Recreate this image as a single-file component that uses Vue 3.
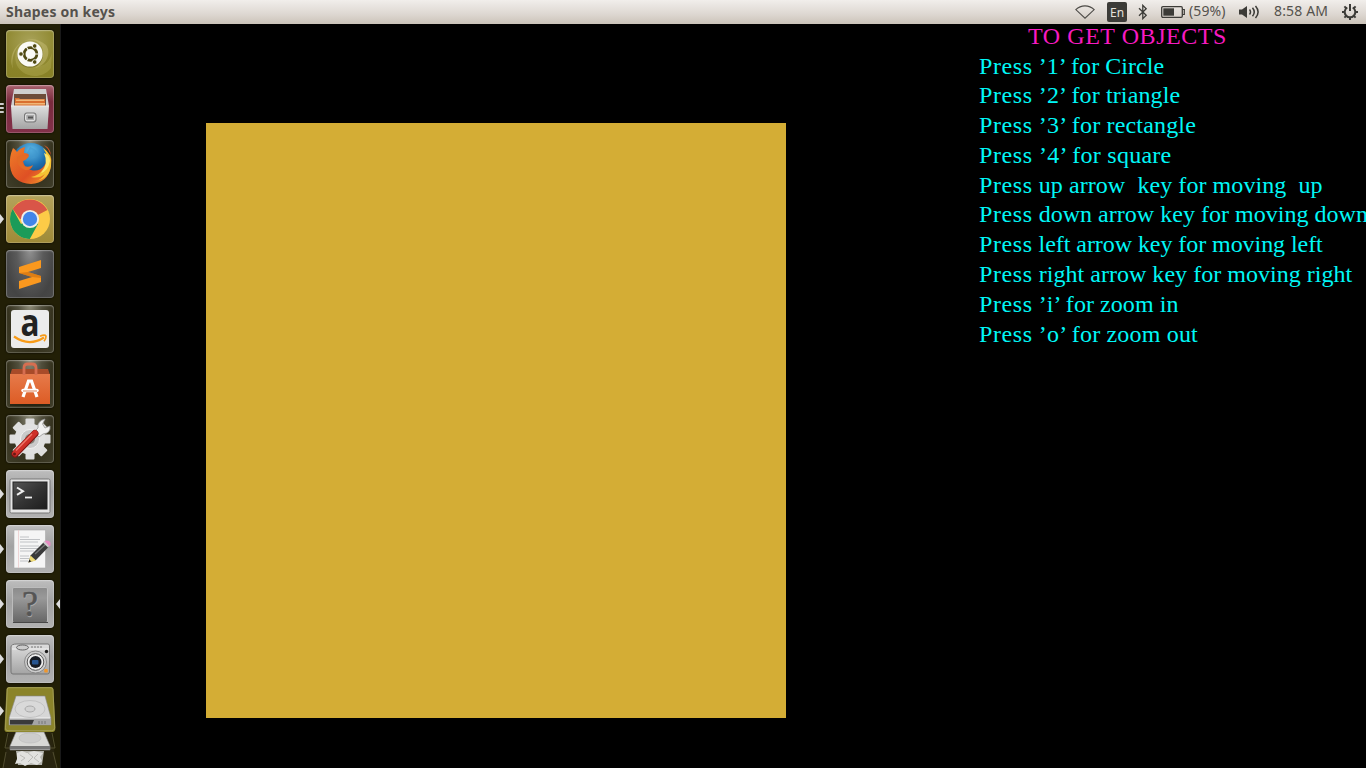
<script setup>
const tiles = [
  { name: 'dash', tone: 'olive' },
  { name: 'files', tone: 'wine', run: 3 },
  { name: 'firefox', tone: 'dark' },
  { name: 'chrome', tone: 'gold', run: 1 },
  { name: 'sublime', tone: 'slate' },
  { name: 'amazon', tone: 'dark' },
  { name: 'software', tone: 'dark' },
  { name: 'settings', tone: 'dark' },
  { name: 'terminal', tone: 'silver', run: 1 },
  { name: 'editor', tone: 'silver', run: 1 },
  { name: 'unknown', tone: 'silver', run: 1, focused: true },
  { name: 'camera', tone: 'silver', run: 1 },
]
const lines = [
  { text: ' ’1’ for Circle', track: 0.04 },
  { text: ' ’2’ for triangle', track: 0.12 },
  { text: ' ’3’ for rectangle', track: 0.18 },
  { text: ' ’4’ for square', track: 0.27 },
  { text: ' up arrow  key for moving  up', track: 0.07 },
  { text: ' down arrow key for moving down', track: 0.02 },
  { text: ' left arrow key for moving left', track: -0.06 },
  { text: ' right arrow key for moving right', track: 0.03 },
  { text: ' ’i’ for zoom in', track: 0.06 },
  { text: ' ’o’ for zoom out', track: 0.18 },
]
const teeth = [0, 45, 90, 135, 180, 225, 270, 315]
</script>

<template>
  <div class="desktop">
    <header class="panel">
      <span class="title">Shapes on keys</span>
      <div class="indicators">
        <svg class="wifi" width="20" height="14" viewBox="0 0 20 14"><path d="M.8 4.600C6-.4 14-.4 19.200 4.600L10 13.200z" fill="none" stroke="#4c4a46" stroke-width="1.100" /></svg>
        <span class="lang">En</span>
        <svg class="bt" width="10" height="16" viewBox="0 0 10 16"><path d="M1 4.200L8.200 11.200 4.800 14.600V1.400L8.200 4.800 1 11.800" fill="none" stroke="#3c3b37" stroke-width="1.300" /></svg>
        <svg class="battery" width="24" height="12" viewBox="0 0 24 12"><rect x=".7" y=".7" width="20.600" height="10.600" rx="1.200" fill="none" stroke="#3c3b37" stroke-width="1.300" /><path d="M2.300 2.300h10.700v7.400H2.300z" fill="#3c3b37" /><path d="M21.500 3.500h1.800v5h-1.800" fill="none" stroke="#3c3b37" stroke-width="1.200" /></svg>
        <span class="percent">(59%)</span>
        <svg class="sound" width="21" height="14" viewBox="0 0 21 14"><path d="M0 4.500h3L8 1v12L3 9.500H0z" fill="#3c3b37" /><path d="M10.500 4.500q2 2.500 0 5M13.500 2.700q3.500 4.300 0 8.600M16.500 1q5.200 6 0 12" fill="none" stroke="#3c3b37" stroke-width="1.500" /></svg>
        <span class="clock">8:58 AM</span>
        <svg class="gear" width="18" height="18" viewBox="0 0 18 18"><path d="M6.300 4.500A5.300 5.300 0 1 0 11.700 4.500" fill="none" stroke="#3c3b37" stroke-width="2" /><path d="M9 1v7M3.400 3.400l2 2M14.600 3.400l-2 2M1 9h3M14 9h3M3.400 14.600l2-2M14.600 14.600l-2-2M9 14v3" stroke="#3c3b37" stroke-width="2" /></svg>
      </div>
    </header>

    <div class="body">
      <nav class="dock">
        <svg class="defs" width="0" height="0">
          <defs>
            <linearGradient id="metal" x2="0" y2="1"><stop stop-color="#dedede" /><stop offset="1" stop-color="#a4a4a4" /></linearGradient>
            <linearGradient id="orange" x2="0" y2="1"><stop stop-color="#e67a4a" /><stop offset="1" stop-color="#dd5c25" /></linearGradient>
            <linearGradient id="screen" x2="1" y2="1"><stop stop-color="#555" /><stop offset=".5" stop-color="#343434" /><stop offset="1" stop-color="#1d1d1d" /></linearGradient>
            <radialGradient id="globe" cx=".5" cy=".2" r=".8"><stop stop-color="#62bce8" /><stop offset=".5" stop-color="#1d70b0" /><stop offset="1" stop-color="#123869" /></radialGradient>
            <linearGradient id="fox" x2="1" y2="1"><stop stop-color="#ef8028" /><stop offset=".6" stop-color="#df5024" /><stop offset="1" stop-color="#f5a22c" /></linearGradient>
            <linearGradient id="box" x2="0" y2="1"><stop stop-color="#8b8b8b" /><stop offset=".3" stop-color="#999" /><stop offset="1" stop-color="#666" /></linearGradient>
          </defs>
        </svg>
        <div v-for="t in tiles" :key="t.name" class="slot">
          <span v-if="t.run === 1" class="arrow"></span>
          <span v-if="t.run === 3" class="pips"><i></i><i></i><i></i></span>
          <span v-if="t.focused" class="arrow focus"></span>
          <div class="tile" :class="t.tone">
            <svg width="48" height="48" viewBox="0 0 48 48">
              <g v-if="t.name === 'dash'">
                <path d="M7 39C3 16 23 0 40 15 46 23 40 36 29 38 43 28 38 9 23 10 9 12 2 26 7 39z" fill="#d1c982" opacity=".4" />
                <path d="M45 38C34 52 14 46 10 33 7 21 14 14 20 12 12 24 22 38 34 36 41 35 45 28 46 22z" fill="#c5bc68" opacity=".3" />
                <circle cx="24" cy="25" r="12.800" fill="#5d571c" opacity=".5" />
                <circle cx="24" cy="24" r="12.600" fill="#fafaf5" />
                <circle cx="24.500" cy="24" r="6.400" fill="none" stroke="#4f4912" stroke-width="2.800" />
                <path d="M24.500 24h9M24.500 24l-4.500-7.800M24.500 24l-4.500 7.800" stroke="#fafaf5" stroke-width="1.100" />
                <g fill="#4f4912" stroke="#fafaf5" stroke-width=".9"><circle cx="15" cy="24" r="2.300" /><circle cx="28.700" cy="16" r="2.300" /><circle cx="28.700" cy="32" r="2.300" /></g>
              </g>
              <g v-else-if="t.name === 'files'">
                <path d="M8 4h32l3 17H5z" fill="#cfcfcf" /><path d="M8 9h32v13H8z" fill="#6d4c3a" />
                <path d="M9 13h4l1 1h25v8H9z" fill="#d96f30" /><path d="M10 14.500h28v1.500H10zM9 18h30v1.500H9z" fill="#f0b778" />
                <path d="M5 21h38l-1.500 23h-35z" fill="url(#metal)" /><path d="M5 21h38" stroke="#ececec" />
                <rect x="18.500" y="28" width="11.500" height="9" rx="2" fill="#aaa" stroke="#777" /><rect x="19.700" y="29.200" width="9" height="6.500" rx="1.500" fill="none" stroke="#eee" /><path d="M22 32.500h5" stroke="#555" stroke-width="2" />
              </g>
              <g v-else-if="t.name === 'firefox'">
                <circle cx="25" cy="22" r="19" fill="url(#globe)" />
                <path d="M24 7q9 3 8 10-6-2-10 4l-5-1z" fill="#3c94cb" opacity=".5" />
                <path d="M7 8q2 1 4 4 3-4 8-5-1 4-1 6 4 0 5 2-2 4-6 6 1 7 8 9 8 2 13-4 4-5 3-13 3 3 3 8Q47 9 38 5q9 7 7 21-3 17-20 18Q6 43 4 26 3 17 7 8z" fill="url(#fox)" />
                <path d="M37 8q7 9 1 20-5 8-13 9 8 2 14-3-4 6-9 7 13-2 15-15 2-12-8-18z" fill="#f6c333" /><path d="M38 13q5 11-3 20 7-2 9-12 0-6-6-8z" fill="#fbe66c" />
                <path d="M11 17q4-3 12-1-3 5-8 5l3 5q5 2 9-1-2 6-8 5-9-4-8-13z" fill="#e46b25" />
              </g>
              <g v-else-if="t.name === 'chrome'">
                <circle cx="24" cy="24" r="20" fill="#fccb47" />
                <path d="M24 24H14L6.700 14A20 20 0 0 1 41.300 15z" fill="#d95548" />
                <path d="M6.700 14A20 20 0 0 0 23.800 44L32 29 24 24 15 29z" fill="#1b9b59" />
                <path d="M24 15h17.500L30 20z" fill="#b98d20" opacity=".25" />
                <circle cx="24" cy="24" r="9.100" fill="#f0eee7" /><circle cx="24" cy="24" r="7.200" fill="#4285e8" />
              </g>
              <g v-else-if="t.name === 'sublime'">
                <path d="M13 17L35 10V18L22 22 35 26V32L13 39V31L26 27 13 23z" fill="#fa981e" /><path d="M13 23l9-1 13 4v2L26 27z" fill="#c66a0c" opacity=".55" />
              </g>
              <g v-else-if="t.name === 'amazon'">
                <rect x="5" y="5" width="38" height="38" rx="3" fill="#ececec" />
                <text x="24" y="31" text-anchor="middle" class="amazon-a" textLength="19" lengthAdjust="spacingAndGlyphs">a</text>
                <path d="M8 31.500q15 10.500 30 1" fill="none" stroke="#f79b18" stroke-width="2.200" /><path d="M34 31.200q5-2 6 0 0 3-2 5" fill="none" stroke="#f79b18" stroke-width="1.700" />
              </g>
              <g v-else-if="t.name === 'software'">
                <path d="M4 43h40v3H4z" fill="#161405" opacity=".5" /><path d="M6 9h36l2 6H4z" fill="#a84b29" /><path d="M4 14h40v30H4z" fill="url(#orange)" />
                <path d="M18 15V8q0-4 4-4h4q4 0 4 4v7" fill="none" stroke="#d66e50" stroke-width="2.800" />
                <path d="M17 37L22.500 21h3L31 37" fill="none" stroke="#fff" stroke-width="3.200" /><path d="M17 30.500h14" stroke="#fff" stroke-width="3.500" stroke-linecap="round" /><path d="M17 31h14" stroke="#dc815a" />
              </g>
              <g v-else-if="t.name === 'settings'">
                <g fill="#dedede"><rect v-for="a in teeth" :key="a" x="19.500" y="3.500" width="9" height="12" rx="1" :transform="`rotate(${a} 24 24)`" /></g>
                <circle cx="24" cy="24" r="15.500" fill="#e1e1e1" /><circle cx="24" cy="24" r="9.500" fill="#cacaca" stroke="#f0f0f0" /><circle cx="24" cy="24" r="5" fill="#85847a" />
                <path d="M28 17l4-4q-1-7 7-9l-2.500 5 2.500 4 5-2q1 7-7 8l-4 3z" fill="#f0f0f0" stroke="#999" stroke-width=".8" />
                <path d="M9 39L29 18.500" stroke="#7f1613" stroke-width="7" stroke-linecap="round" /><path d="M9 38.500L29 18" stroke="#cf3029" stroke-width="5.500" stroke-linecap="round" /><path d="M10 35.500L26 19" stroke="#ee7a6e" stroke-width="1.300" /><circle cx="8.500" cy="39" r="1.500" fill="#681713" />
              </g>
              <g v-else-if="t.name === 'terminal'">
                <rect x="4" y="9" width="40" height="34" rx="1.500" fill="#e6e6e6" stroke="#777" /><rect x="7" y="12" width="34" height="27" fill="url(#screen)" stroke="#222" />
                <path d="M11 17.500l6 3.700-6 3.700" fill="none" stroke="#eee" stroke-width="2" /><path d="M19 27.500h7" stroke="#eee" stroke-width="1.800" />
              </g>
              <g v-else-if="t.name === 'editor'">
                <path d="M8 5h31.500v38H8z" fill="#f5f5f5" stroke="#aaa" stroke-width=".6" /><path d="M12.500 5v38" stroke="#e9c5c5" stroke-width=".7" />
                <path d="M14 12h9M14 14.500h20M14 17h18M14 21h19M14 23.500h20M14 26h14M14 31h9M14 33.500h9M14 36h8" stroke="#c0c2c5" stroke-width="1" />
                <path d="M22.500 37.500l2-7L38 17l5 4.500L30 35z" fill="#3a3a3a" /><path d="M29 29l12-11" stroke="#777" stroke-width="1.200" /><path d="M22.500 37.500l2-7 5.500 5z" fill="#efdb76" /><path d="M22.500 37.500l.8-3 2 2z" fill="#222" /><path d="M36.800 17.500l2.200-2 5.200 4.500-2.200 2.500z" fill="#ccc" /><path d="M38.500 16q4-1.500 6 1.500v3l-1 1z" fill="#e68bc2" />
              </g>
              <g v-else-if="t.name === 'unknown'">
                <rect x="6.500" y="7.500" width="35" height="35" rx="1.500" fill="url(#box)" stroke="#bcbcbc" /><path d="M7 42.500h35" stroke="#474747" />
                <text x="24.500" y="37" text-anchor="middle" class="question light">?</text><text x="24" y="36" text-anchor="middle" class="question">?</text>
              </g>
              <g v-else>
                <path d="M5 12q0-3 6-3h31q1.500 0 1.500 2v26q0 2-2 2H7q-2 0-2-2z" fill="url(#metal)" stroke="#777" /><path d="M6 14h37" stroke="#f1f1f1" />
                <ellipse cx="16.500" cy="12.500" rx="6" ry="2.500" fill="#ccc" stroke="#666" /><path d="M25 12h12" stroke="#777" stroke-dasharray="2 1" /><circle cx="40.500" cy="16.500" r="1.700" fill="#1a1a1a" /><path d="M38.500 34h3v3h-3z" fill="#ef962c" />
                <circle cx="29.500" cy="27" r="11" fill="#ccc" stroke="#888" /><circle cx="29.500" cy="27" r="8.300" fill="#eee" stroke="#555" /><circle cx="29.500" cy="27" r="6" fill="#171b22" /><rect x="26" y="25" width="6.500" height="4.500" rx="1" fill="#275590" /><path d="M38.500 35h3v2.500h-3z" fill="#ef962c" />
              </g>
            </svg>
          </div>
        </div>
        <div class="stack">
          <span class="arrow"></span>
          <svg width="60" height="81" viewBox="0 0 60 81">
            <path d="M9 44h42l6 37H3z" fill="#28240f" /><path d="M8 46l-3 15h50l-3-15M6 65l-3 16M53 65l4 16" fill="none" stroke="#5c5838" stroke-width=".8" />
            <path d="M16 64h28l-2 14H18z" fill="#b5b5ae" /><path d="M17 66l5-2 5 2 7-2 9 2-3 4 2 4-5 4-6-2-6 3-5-3-5 1 2-5z" fill="#e2e2df" /><path d="M20 68l5 3-4 3M28 66l5 4-5 5M38 67l-4 4 5 4" fill="none" stroke="#bdbdb9" />
            <path d="M16 45h28l6 14v4H10v-4z" fill="#d8d8d6" stroke="#888" stroke-width=".6" /><path d="M10 59h40v3.500H10z" fill="#777" /><ellipse cx="30" cy="51" rx="11" ry="5" fill="#ccc" stroke="#bbb" stroke-width=".6" />
            <path d="M9 0h42q2 0 2.400 2l2 39q0 4-3 4H7q-3 0-2.500-4L6.500 2Q7 0 9 0z" fill="#8b842a" /><path d="M9 .7h42q1.500 0 2 2l1.700 38q0 3-3 3H8q-3 0-2.500-3L7.300 2Q7.500.7 9 .7z" fill="none" stroke="#aaa562" stroke-width=".8" />
            <path d="M16 9h29l6 22v7H9v-7z" fill="#d6d6d6" stroke="#888" stroke-width=".6" /><path d="M9 31h42v7H9z" fill="#a5a5a5" /><path d="M10 31h40" stroke="#f3f3f3" /><path d="M10 33h24l-2 4.500H10z" fill="#3a3a3a" /><path d="M39 34v3M42 34v3M45 34v3" stroke="#777" />
            <ellipse cx="30" cy="22" rx="15" ry="8.500" fill="#d9d9d9" stroke="#c2c2c2" /><ellipse cx="30" cy="22" rx="5" ry="3" fill="#d2d2d2" stroke="#aaa" />
          </svg>
        </div>
      </nav>

      <main class="canvas">
        <div class="square"></div>
        <section class="help">
          <h1>TO GET OBJECTS</h1>
          <p v-for="l in lines" :key="l.text" :style="{ letterSpacing: l.track + 'px' }"><span class="verb">Press</span>{{ l.text }}</p>
        </section>
      </main>
    </div>
  </div>
</template>

<style>
html, body { margin: 0; background: #000; overflow: hidden; }
</style>
<style scoped>
.desktop { width: 1366px; height: 768px; overflow: hidden; background: #000; display: flex; flex-direction: column; }
.panel { height: 24px; flex: none; box-sizing: border-box; background: linear-gradient(#f1eeeb, #ddd7d1 60%, #cbc3b9); display: flex; justify-content: space-between; padding: 0 7px 0 6px; font-family: "Noto Sans", "Open Sans", sans-serif; color: #3c3b37; }
.title { font-size: 14px; font-weight: 700; line-height: 23px; color: #55524d; letter-spacing: .2px; white-space: nowrap; }
.indicators { display: flex; align-items: center; white-space: nowrap; }
.wifi { margin-right: 12px; }
.lang { width: 20px; height: 20px; border-radius: 2px; background: #3c3b37; color: #e6e1db; font-size: 12px; line-height: 21px; text-align: center; }
.bt { margin: 0 13px 0 11px; }
.percent { width: 38px; margin: 0 12px 0 4px; font-size: 14px; line-height: 22px; padding-bottom: 2px; letter-spacing: .1px; color: #55524d; }
.clock { width: 56px; margin: 0 11px 0 14px; font-size: 14px; line-height: 22px; padding-bottom: 2px; letter-spacing: .15px; color: #55524d; }
.body { flex: 1; min-height: 0; display: flex; }
.dock { width: 60px; flex: none; background: #221f06; border-right: 1px solid #191919; padding-top: 6px; display: flex; flex-direction: column; gap: 7px; overflow: hidden; }
.defs { position: absolute; }
.slot { height: 48px; flex: none; position: relative; padding-left: 6px; }
.tile { width: 48px; height: 48px; border-radius: 4px; box-shadow: inset 0 0 0 1px rgba(255,255,255,.17), inset 0 1px 2px rgba(255,255,255,.25), 0 0 2px #000; }
.tile svg { display: block; overflow: visible; }
.olive { background: radial-gradient(circle at 50% 25%, #a9a35a, #8a8328 70%, #888126); }
.wine { background: linear-gradient(#a8616d, #792a3c 35%, #83314a); }
.dark { background: radial-gradient(ellipse at 50% 0, #8d8b78, #504e3c 35%, #36331f 65%, #403e2a); }
.gold { background: linear-gradient(#b4a35b, #9f8a37); }
.slate { background: radial-gradient(ellipse at 50% 0, #929292, #5a5a5a 40%, #444 75%, #494949); }
.silver { background: linear-gradient(#bdbdbd, #a2a2a2 45%, #b2b2b2); }
.arrow { position: absolute; left: 0; top: 19px; border: 5px solid transparent; border-left-color: #ddd; border-right: 0; border-left-width: 4px; }
.focus { left: auto; right: 0; border-left: 0; border-right: 4px solid #ddd; }
.pips { position: absolute; left: 0; top: 18px; display: flex; flex-direction: column; gap: 2px; }
.pips i { width: 4px; height: 2px; background: #ccc; border-radius: 0 1px 1px 0; }
.amazon-a { font: 700 38px "Open Sans", sans-serif; fill: #222; }
.question { font: 36px "Liberation Serif", serif; fill: #555; stroke: #555; stroke-width: .5px; }
.light { fill: #aaa; stroke: #aaa; }
.stack { position: relative; height: 81px; flex: none; margin-top: -3px; }
.stack svg { display: block; }
.canvas { flex: 1; min-width: 0; display: flex; overflow: hidden; padding-left: 145px; }
.square { width: 580px; height: 595px; flex: none; margin-top: 99px; background: #d4ad35; }
.help { width: 387px; flex: none; margin-left: 193px; white-space: pre; font: 24px/29.8px "Liberation Serif", "Times New Roman", serif; color: #00f7f7; }
.help h1 { margin: 0 0 2.500px 49px; font: inherit; line-height: 25px; color: #f71bc1; letter-spacing: .56px; }
.help p { margin: 0; }
.verb { letter-spacing: .6px; }
</style>
